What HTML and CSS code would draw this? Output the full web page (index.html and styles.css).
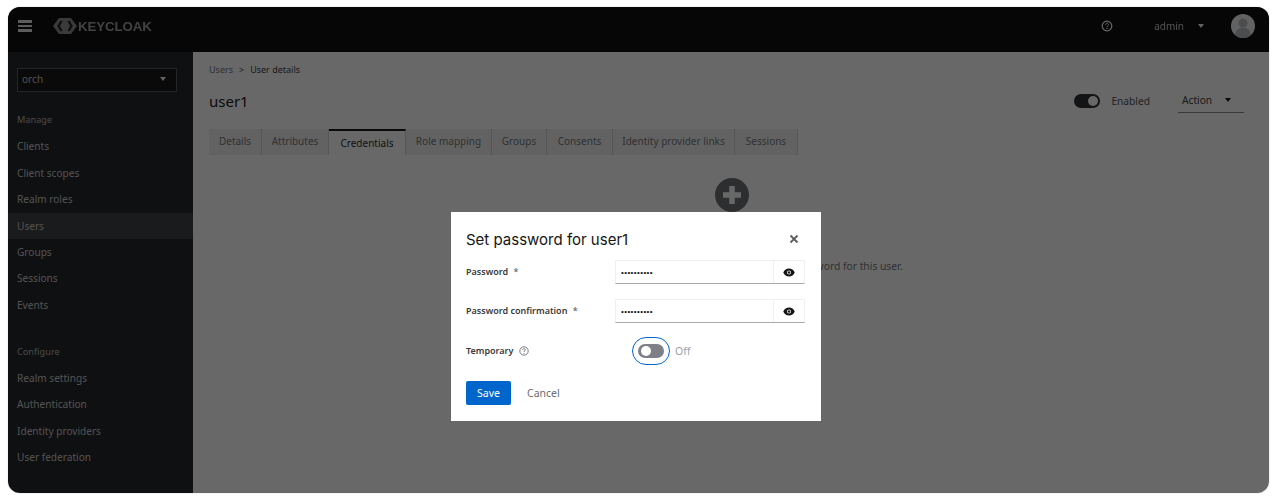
FILE: index.html
```html
<!DOCTYPE html>
<html lang="en">
<head>
  <meta charset="UTF-8">
  <title>Keycloak - Set password</title>
  <link rel="stylesheet" href="styles.css">
</head>
<body>
  <div class="frame">
    <!-- HEADER -->
    <header class="masthead">
      <div class="burger"><span></span><span></span><span></span></div>
      <div class="logo">
        <svg class="logo-mark" width="26" height="18" viewBox="0 0 26 18">
          <path d="M7 1h12l6 8-6 8H7L1 9z" fill="#8c8c8c"/>
          <path d="M9.500 4 6.500 9l3 5M16.500 4l3 5-3 5" fill="none" stroke="#222" stroke-width="2.400"/>
        </svg>
        <span class="logo-text">KEYCLOAK</span>
      </div>
      <div class="masthead-right">
        <svg class="help-top" width="12" height="12" viewBox="0 0 12 12">
          <circle cx="6" cy="6" r="4.800" fill="none" stroke="#fff" stroke-width="1.200"/>
          <path d="M4.500 4.800c0-2 3-2 3-.2 0 1.100-1.500 1.100-1.500 2.400" fill="none" stroke="#fff" stroke-width="1"/>
          <circle cx="6" cy="8.500" r=".7" fill="#fff"/>
        </svg>
        <span class="admin">admin</span>
        <span class="caret caret-light"></span>
        <svg class="avatar" width="24" height="24" viewBox="0 0 24 24">
          <circle cx="12" cy="12" r="12" fill="#f0f0f0"/>
          <circle cx="12" cy="9" r="4.500" fill="#b8bbbe"/>
          <path d="M4 21c1-6 4-7 8-7s7 1 8 7a12 12 0 0 1-16 0z" fill="#b8bbbe"/>
        </svg>
      </div>
    </header>

    <div class="body-row">
      <!-- SIDEBAR -->
      <nav class="sidebar">
        <div class="realm"><span>orch</span><span class="caret caret-light"></span></div>
        <div class="nav-title">Manage</div>
        <a class="nav-item">Clients</a>
        <a class="nav-item">Client scopes</a>
        <a class="nav-item">Realm roles</a>
        <a class="nav-item active">Users</a>
        <a class="nav-item">Groups</a>
        <a class="nav-item">Sessions</a>
        <a class="nav-item">Events</a>
        <div class="nav-title nav-title-second">Configure</div>
        <a class="nav-item">Realm settings</a>
        <a class="nav-item">Authentication</a>
        <a class="nav-item">Identity providers</a>
        <a class="nav-item">User federation</a>
      </nav>

      <!-- MAIN -->
      <main class="content">
        <div class="page-head">
          <div class="breadcrumb"><span class="crumb-link">Users</span><span class="crumb-sep">&gt;</span><span>User details</span></div>
          <div class="title-row">
            <h1>user1</h1>
            <div class="title-actions">
              <span class="switch switch-on"><i></i></span>
              <span class="enabled">Enabled</span>
              <div class="action"><span>Action</span><span class="caret caret-dark"></span></div>
            </div>
          </div>
        </div>
        <div class="tabs">
          <span class="tab">Details</span>
          <span class="tab">Attributes</span>
          <span class="tab current">Credentials</span>
          <span class="tab">Role mapping</span>
          <span class="tab">Groups</span>
          <span class="tab">Consents</span>
          <span class="tab">Identity provider links</span>
          <span class="tab">Sessions</span>
        </div>
        <div class="empty">
          <svg width="34" height="34" viewBox="0 0 34 34">
            <circle cx="17" cy="17" r="17" fill="#6a6e73"/>
            <path d="M17 8v18M8 17h18" stroke="#fff" stroke-width="5.500"/>
          </svg>
          <p>No credentials found for this user. You can set a password for this user.</p>
        </div>
      </main>
    </div>

    <!-- MODAL -->
    <div class="backdrop">
      <div class="modal">
        <div class="modal-head">
          <h2>Set password for user1</h2>
          <svg class="close" width="10" height="10" viewBox="0 0 10 10">
            <path d="M1.500 1.500l7 7M8.500 1.500l-7 7" stroke="#5a5d61" stroke-width="1.800"/>
          </svg>
        </div>
        <div class="form">
          <label>Password <em>*</em></label>
          <div class="pw-field">
            <span class="dots">••••••••••</span>
            <span class="eye">
              <svg width="12" height="9" viewBox="0 0 12 9">
                <path d="M6 .5C3.500.5 1.300 2 .3 4.500c1 2.500 3.200 4 5.700 4s4.700-1.500 5.700-4C10.700 2 8.500.5 6 .5z" fill="#151515"/>
                <circle cx="6" cy="4.500" r="2" fill="#fff"/>
                <circle cx="6" cy="4.500" r="1.200" fill="#151515"/>
              </svg>
            </span>
          </div>
          <label>Password confirmation <em>*</em></label>
          <div class="pw-field">
            <span class="dots">••••••••••</span>
            <span class="eye">
              <svg width="12" height="9" viewBox="0 0 12 9">
                <path d="M6 .5C3.500.5 1.300 2 .3 4.500c1 2.500 3.200 4 5.700 4s4.700-1.500 5.700-4C10.700 2 8.500.5 6 .5z" fill="#151515"/>
                <circle cx="6" cy="4.500" r="2" fill="#fff"/>
                <circle cx="6" cy="4.500" r="1.200" fill="#151515"/>
              </svg>
            </span>
          </div>
          <label class="temp-label">Temporary
            <svg width="10" height="10" viewBox="0 0 10 10">
              <circle cx="5" cy="5" r="4.200" fill="none" stroke="#6a6e73" stroke-width=".9"/>
              <path d="M3.700 4c0-1.600 2.600-1.600 2.600-.1 0 .9-1.300.9-1.300 2" fill="none" stroke="#6a6e73" stroke-width=".9"/>
              <circle cx="5" cy="7.200" r=".55" fill="#6a6e73"/>
            </svg>
          </label>
          <div class="temp-control">
            <span class="focus-ring"><span class="switch switch-off"><i></i></span></span>
            <span class="off">Off</span>
          </div>
        </div>
        <div class="modal-actions">
          <button class="save">Save</button>
          <button class="cancel">Cancel</button>
        </div>
      </div>
    </div>
  </div>
</body>
</html>
```

FILE: styles.css
```css
/* RESET */
* {
  margin: 0;
  padding: 0;
  box-sizing: border-box;
}

html, body {
  height: 100%;
  background: #fff;
  font-family: "Noto Sans", "Open Sans", sans-serif;
  overflow: hidden;
}

.frame {
  position: relative;
  width: 1261px;
  height: 486px;
  margin: 7px 0 0 8px;
  border-radius: 12px;
  overflow: hidden;
  display: flex;
  flex-direction: column;
  background: #fff;
  box-shadow: 0 0 1px #8f8fa0;
  filter: blur(0.35px); /* Screenshot ist leicht unscharf */
}

/* HEADER */
.masthead {
  height: 45px;
  background: #0a0a0a;
  display: flex;
  align-items: center;
  padding: 0 14px 7px 10px;
  color: #fff;
}

.burger {
  width: 14px;
  display: flex;
  flex-direction: column;
  gap: 2px;
}

.burger span {
  height: 2.500px;
  background: #e0e0e0;
}

.logo {
  display: flex;
  align-items: center;
  margin-left: 20px;
}

.logo-text {
  font-family: "Liberation Sans", sans-serif;
  font-size: 13.300px;
  font-weight: bold;
  letter-spacing: -0.100px;
  color: #a0a0a0;
}

.masthead-right {
  margin-left: auto;
  display: flex;
  align-items: center;
}

.help-top {
  margin-right: 5px;
}

.admin {
  font-size: 10px;
  margin-left: 36px;
  color: #c8c8c8;
}

.masthead-right .caret {
  margin-left: 14px;
}

.avatar {
  margin-left: 27px;
}

.caret {
  display: inline-block;
  width: 0;
  height: 0;
  border-left: 3.500px solid transparent;
  border-right: 3.500px solid transparent;
}

.caret-light {
  border-top: 4px solid #f0f0f0;
}

.caret-dark {
  border-top: 4px solid #151515;
}

.body-row {
  flex: 1;
  display: flex;
  min-height: 0;
}

/* SIDEBAR */
.sidebar {
  width: 185px;
  background: #212427;
  padding: 16px 0 0;
  color: #c0c0c0;
  font-size: 10.100px;
}

.realm {
  width: 160px;
  height: 24px;
  margin: 0 0 0 9px;
  background: #151515;
  border: 1px solid #55585c;
  display: flex;
  align-items: center;
  justify-content: space-between;
  padding: 0 10px 2px 4px;
}

.nav-title {
  height: 26.400px;
  line-height: 26.400px;
  margin-top: 15px;
  padding-left: 9px;
  color: #b4b4b4;
  font-size: 9.200px;
}

.nav-title-second {
  margin-top: 20.500px;
}

.nav-item {
  display: block;
  height: 26.400px;
  line-height: 26.400px;
  padding-left: 9px;
  color: #c8c8c8;
}

.nav-item.active {
  background: #3c3f42;
}

/* MAIN */
.content {
  flex: 1;
  background: #fff;
  display: flex;
  flex-direction: column;
}

.page-head {
  padding: 11px 25px 0 16px;
}

.breadcrumb {
  font-size: 9px;
  line-height: 14px;
  color: #3c3c3c;
  display: flex;
  gap: 6px;
}

.crumb-link {
  color: #74777b;
}

.crumb-sep {
  color: #4a4a4a;
}

.title-row {
  display: flex;
  align-items: center;
  justify-content: space-between;
  margin-top: 7px;
  height: 34px;
}

h1 {
  font-size: 15px;
  font-weight: 400;
  color: #151515;
}

.title-actions {
  display: flex;
  align-items: center;
  font-size: 10.200px;
  color: #4f5255;
}

.enabled {
  margin-left: 11px;
}

.action {
  width: 66px;
  height: 24px;
  margin-left: 28px;
  padding: 0 0 1px 4px;
  border-bottom: 1px solid #8a8d90;
  display: flex;
  align-items: center;
  gap: 13px;
  color: #3c3c3c;
}

.switch {
  display: inline-block;
  position: relative;
  width: 26px;
  height: 14px;
  border-radius: 7px;
}

.switch i {
  position: absolute;
  top: 2px;
  width: 10px;
  height: 10px;
  border-radius: 50%;
  background: #fff;
}

.switch-on {
  background: #2a2d30;
}

.switch-on i {
  right: 2px;
}

.switch-off {
  background: #7d8086;
}

.switch-off i {
  left: 3px;
}

/* TABS */
.tabs {
  display: flex;
  margin: 11px 0 0 16px;
  height: 26px;
  font-size: 10px;
  width: 589px;
}

.tab {
  display: flex;
  align-items: center;
  justify-content: center;
  padding-bottom: 2px;
  background: #f0f0f0;
  color: #74777b;
  border-right: 1px solid #d2d2d2;
  white-space: nowrap;
}

.tab:nth-child(1) { width: 53px; }
.tab:nth-child(2) { width: 67px; }
.tab:nth-child(3) { width: 77px; }
.tab:nth-child(4) { width: 86px; }
.tab:nth-child(5) { width: 55px; }
.tab:nth-child(6) { width: 66px; }
.tab:nth-child(7) { width: 122px; }
.tab:nth-child(8) { width: 63px; }

.tab.current {
  background: #fff;
  color: #2a2a2a;
  border-top: 2px solid #151515;
  padding-bottom: 0;
}

/* EMPTY STATE */
.empty {
  display: flex;
  flex-direction: column;
  align-items: center;
  padding: 23px 0 0 2px;
  font-size: 10.300px;
  color: #74777b;
}

.empty p {
  margin-top: 47px;
  white-space: nowrap;
}

/* MODAL */
.backdrop {
  position: absolute;
  inset: 0;
  background: rgba(3, 3, 3, 0.6);
  padding: 205px 0 0 443px;
}

.modal {
  width: 370px;
  height: 209px;
  background: #fff;
  padding: 15px 16px 0 15px;
}

.modal-head {
  display: flex;
  align-items: center;
  justify-content: space-between;
  height: 24px;
  padding: 0 6px 0 0;
}

h2 {
  font-family: "Inter", sans-serif;
  font-size: 15px;
  font-weight: 400;
  color: #151515;
}

.form {
  display: grid;
  grid-template-columns: 149px 190px;
  grid-auto-rows: 24px;
  row-gap: 15px;
  margin-top: 9px;
  align-items: center;
  font-size: 9px;
  color: #151515;
}

.form label {
  font-weight: 600;
  color: #3a3a3a;
  padding-bottom: 1px;
}

.form em {
  font-style: normal;
  color: #6a6e73;
  margin-left: 3px;
}

.pw-field {
  height: 24px;
  display: flex;
  border: 1px solid #f0f0f0;
  border-bottom: 1px solid #a8abae;
}

.dots {
  flex: 1;
  display: flex;
  align-items: center;
  padding-left: 5px;
  font-family: "Liberation Sans", sans-serif;
  font-size: 8px;
  letter-spacing: 0.400px;
}

.eye {
  width: 31px;
  border-left: 1px solid #f0f0f0;
  display: flex;
  align-items: center;
  justify-content: center;
}

.temp-label {
  display: flex;
  align-items: center;
  gap: 6px;
  margin-top: 2px;
}

.temp-control {
  display: flex;
  align-items: center;
  padding: 1px 0 0 17px;
}

.focus-ring {
  width: 38px;
  height: 28px;
  border: 1.500px solid #0066cc;
  border-radius: 14px;
  display: flex;
  align-items: center;
  justify-content: center;
}

.off {
  margin-left: 5px;
  font-size: 10.500px;
  color: #a0a3a6;
}

.modal-actions {
  display: flex;
  align-items: center;
  margin-top: 19px;
  font-size: 10.500px;
}

button {
  font-family: inherit;
  font-size: inherit;
  border: none;
  background: none;
}

.save {
  width: 45px;
  height: 24px;
  background: #0066cc;
  color: #fff;
  border-radius: 2px;
}

.cancel {
  margin-left: 16px;
  color: #6a6e73;
}
```
